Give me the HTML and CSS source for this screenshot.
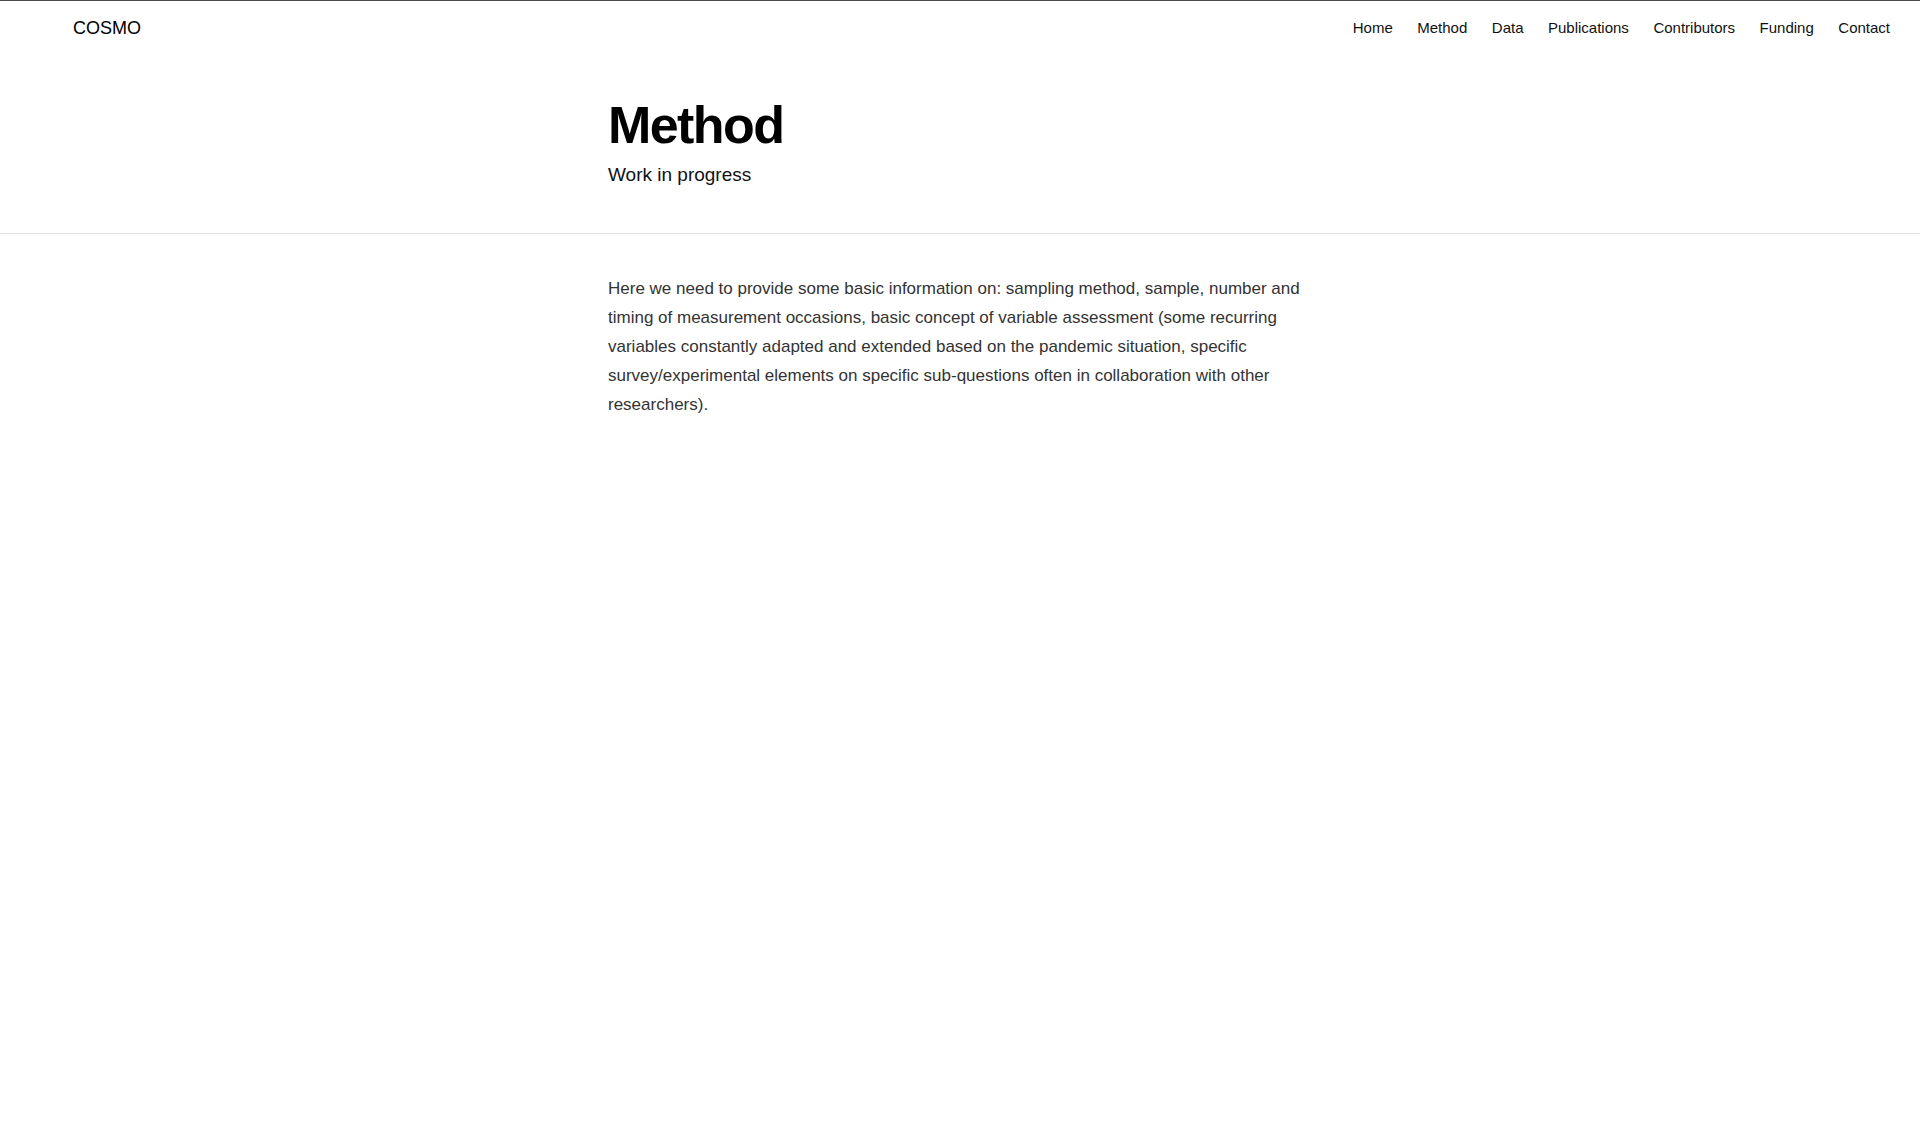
FILE: index.html
```html
<!DOCTYPE html>
<html lang="en">
<head>
<meta charset="utf-8">
<title>Method - COSMO</title>
<link rel="stylesheet" href="styles.css">
</head>
<body>
<header class="site-header">
  <a class="brand" href="#">COSMO</a>
  <nav class="nav">
    <a href="#">Home</a>
    <a href="#">Method</a>
    <a href="#">Data</a>
    <a href="#">Publications</a>
    <a href="#">Contributors</a>
    <a href="#">Funding</a>
    <a href="#">Contact</a>
  </nav>
</header>
<section class="hero">
  <div class="column">
    <h1 class="title">Method</h1>
    <p class="subtitle">Work in progress</p>
  </div>
</section>
<main class="content">
  <div class="column">
    <p class="body-text">Here we need to provide some basic information on: sampling method, sample, number and timing of measurement occasions, basic concept of variable assessment (some recurring variables constantly adapted and extended based on the pandemic situation, specific survey/experimental elements on specific sub-questions often in collaboration with other researchers).</p>
  </div>
</main>
</body>
</html>
```
FILE: styles.css
```css
html, body {
  margin: 0;
  padding: 0;
  background: #ffffff;
}
body {
  font-family: "Liberation Sans", Arial, sans-serif;
  color: #000;
  border-top: 1px solid #4a4a4a;
}
a {
  color: inherit;
  text-decoration: none;
}
.site-header {
  display: flex;
  justify-content: space-between;
  align-items: center;
  height: 53px;
  padding: 0 30px 0 73px;
}
.brand {
  font-size: 18px;
  color: #000;
  position: relative;
  top: 1px;
}
.nav {
  display: flex;
  gap: 24.5px;
  font-size: 15px;
  color: #111;
}
.column {
  width: 704px;
  margin: 0 auto;
}
.hero {
  padding: 45px 0 46px;
  border-bottom: 1px solid #e3e3e3;
}
.title {
  margin: 0;
  font-size: 52px;
  line-height: 1;
  font-weight: 700;
  letter-spacing: -0.03em;
  color: #000;
}
.subtitle {
  margin: 13px 0 0;
  font-size: 19px;
  line-height: 1.2;
  color: #111;
}
.content {
  padding-top: 40px;
}
.body-text {
  margin: 0;
  font-size: 17px;
  line-height: 29px;
  color: #333;
}
```
